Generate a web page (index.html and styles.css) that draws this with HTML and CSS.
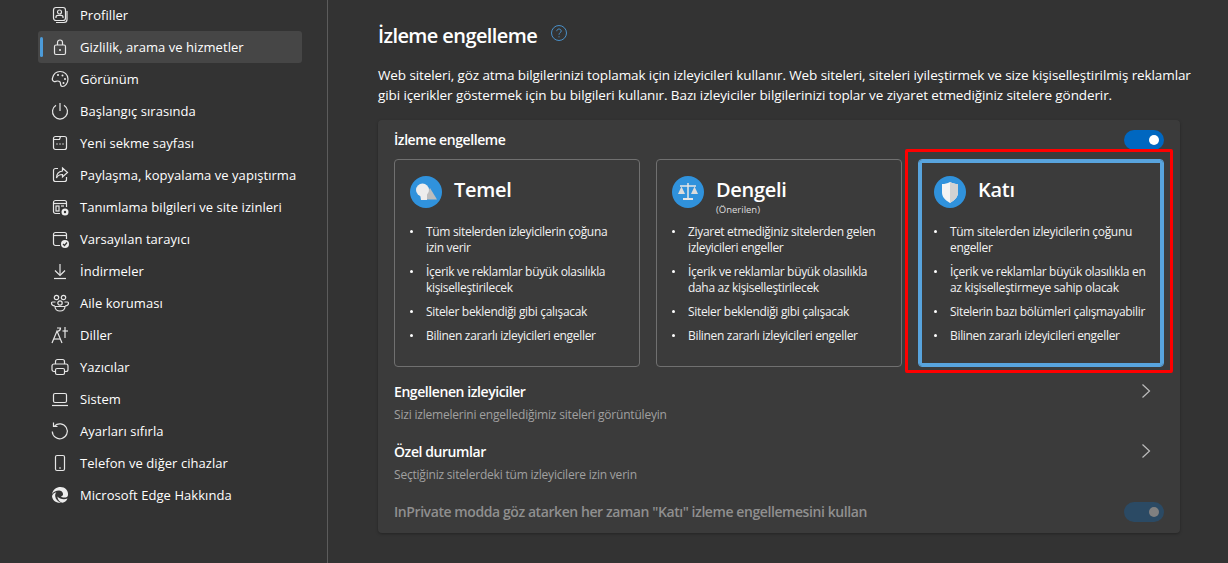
FILE: index.html
```html
<!DOCTYPE html>
<html lang="tr">
<head>
    <meta charset="UTF-8">
    <title>Ayarlar</title>
    <link rel="stylesheet" href="styles.css">
</head>
<body>
    <div class="page">
        <nav class="sidebar">
            <a class="nav-item">
                <svg class="nav-icon" viewBox="0 0 20 20"><rect x="3.500" y="2.500" width="12" height="13" rx="2.500"/><circle cx="9.500" cy="7" r="2"/><path d="M6 13v-1c0-1 1-1.700 2-1.700h3c1 0 2 .7 2 1.700v1"/><path d="M17 6v8.500c0 2-1 3-3 3H6"/></svg>
                <span>Profiller</span>
            </a>
            <a class="nav-item active">
                <svg class="nav-icon" viewBox="0 0 20 20"><rect x="4.500" y="8" width="11" height="9.500" rx="1.500"/><path d="M7.500 8V5.500a2.500 2.500 0 0 1 5 0V8"/><circle class="fill" cx="10" cy="13" r="1"/></svg>
                <span>Gizlilik, arama ve hizmetler</span>
            </a>
            <a class="nav-item">
                <svg class="nav-icon" viewBox="0 0 20 20"><path d="M10 2.500c4.500 0 8 3.200 8 7.500 0 4.200-3 7.500-5.500 7.500-2 0-2-1.500-2-3 0-1.500-1-2.500-3-2.500-1.500 0-2.500 1-3.500.5-1.500-.7-2-2-1.500-3.500C3.500 5 6.500 2.500 10 2.500z"/><circle class="fill" cx="8" cy="6" r="1"/><circle class="fill" cx="12.500" cy="6.500" r="1"/><circle class="fill" cx="15" cy="10" r="1"/><circle class="fill" cx="13.500" cy="14" r="1"/></svg>
                <span>Görünüm</span>
            </a>
            <a class="nav-item">
                <svg class="nav-icon" viewBox="0 0 20 20"><path d="M10 2v8"/><path d="M6 4.200a7.500 7.500 0 1 0 8 0"/></svg>
                <span>Başlangıç sırasında</span>
            </a>
            <a class="nav-item">
                <svg class="nav-icon" viewBox="0 0 20 20"><rect x="3.500" y="3.500" width="13" height="13" rx="2"/><path d="M3.500 6.500h6l1-3"/><path class="dots" d="M6.500 11h1M9.500 11h1M12.500 11h1"/></svg>
                <span>Yeni sekme sayfası</span>
            </a>
            <a class="nav-item">
                <svg class="nav-icon" viewBox="0 0 20 20"><path d="M8 3.500H5.500a2 2 0 0 0-2 2v9a2 2 0 0 0 2 2h9a2 2 0 0 0 2-2V12"/><path d="M12.500 3l5 4.500-5 4.500V9.500c-3 0-5 1-6 3.500 0-4 2-6.500 6-7z"/></svg>
                <span>Paylaşma, kopyalama ve yapıştırma</span>
            </a>
            <a class="nav-item">
                <svg class="nav-icon" viewBox="0 0 20 20"><path d="M10 16.500H5.500a2 2 0 0 1-2-2v-9a2 2 0 0 1 2-2h9a2 2 0 0 1 2 2V10"/><path d="M3.500 6.500h13"/><rect x="6" y="9" width="3" height="5"/><path d="M11 9h3"/><circle class="fill" cx="15" cy="15" r="3.500"/><circle class="hole" cx="15" cy="15" r="1.200"/></svg>
                <span>Tanımlama bilgileri ve site izinleri</span>
            </a>
            <a class="nav-item">
                <svg class="nav-icon" viewBox="0 0 20 20"><path d="M10 16.500H5.500a2 2 0 0 1-2-2v-9a2 2 0 0 1 2-2h9a2 2 0 0 1 2 2V10"/><path d="M3.500 6.500h13"/><circle class="fill" cx="15" cy="15" r="4"/><path class="check" d="M13 15l1.500 1.500 2.500-3"/></svg>
                <span>Varsayılan tarayıcı</span>
            </a>
            <a class="nav-item">
                <svg class="nav-icon" viewBox="0 0 20 20"><path d="M10 3v11"/><path d="M5 9.500l5 5 5-5"/><path d="M4 17.500h12"/></svg>
                <span>İndirmeler</span>
            </a>
            <a class="nav-item">
                <svg class="nav-icon" viewBox="0 0 20 20"><circle cx="6.500" cy="4.500" r="2.200"/><circle cx="13.500" cy="4.500" r="2.200"/><circle cx="10" cy="10" r="2.200"/><path d="M5.500 9H2.500c-1 0-1 .7-1 1.300 0 1.500 1.500 2.500 3.500 2.700"/><path d="M14.500 9h3c1 0 1 .7 1 1.300 0 1.500-1.500 2.500-3.500 2.700"/><path d="M5 13.500c0 2.500 2 4.500 5 4.500s5-2 5-4.500z"/></svg>
                <span>Aile koruması</span>
            </a>
            <a class="nav-item">
                <svg class="nav-icon" viewBox="0 0 20 20"><path d="M2 18L7 6l5 12"/><path d="M4 14h6"/><path d="M7 3h3.500c0 2-1 3-3 3.500"/><path d="M15 2v11"/><path d="M12.500 6h5.500"/></svg>
                <span>Diller</span>
            </a>
            <a class="nav-item">
                <svg class="nav-icon" viewBox="0 0 20 20"><path d="M5.500 7V4.500a2 2 0 0 1 2-2h5a2 2 0 0 1 2 2V7"/><path d="M5.500 14.500H4a2 2 0 0 1-2-2V9a2 2 0 0 1 2-2h12a2 2 0 0 1 2 2v3.500a2 2 0 0 1-2 2h-1.500"/><rect x="5.500" y="11.500" width="9" height="6" rx="1.500"/></svg>
                <span>Yazıcılar</span>
            </a>
            <a class="nav-item">
                <svg class="nav-icon" viewBox="0 0 20 20"><rect x="3.500" y="4.500" width="13" height="9" rx="1.500"/><path d="M2 16.500h16"/></svg>
                <span>Sistem</span>
            </a>
            <a class="nav-item">
                <svg class="nav-icon" viewBox="0 0 20 20"><path d="M4.500 5a7.500 7.500 0 1 1-2.200 5.500"/><path d="M3.500 1.500V5.500H7.500"/></svg>
                <span>Ayarları sıfırla</span>
            </a>
            <a class="nav-item">
                <svg class="nav-icon" viewBox="0 0 20 20"><rect x="5.500" y="2.500" width="9" height="15" rx="1.500"/><path d="M9 15h2"/></svg>
                <span>Telefon ve diğer cihazlar</span>
            </a>
            <a class="nav-item">
                <svg class="nav-icon" viewBox="0 0 20 20"><path class="fill" d="M2 9C3 4.500 6.500 2 10.500 2c4.500 0 8 3.500 7.500 8 0 1.800-1.800 2.600-3.800 2.600-1.500 0-2.700-.4-3.200-1 1.500-.5 2.200-1.500 2-2.800C12.500 6.500 11 5.500 9 5.500 6 5.500 3.500 7 2 9z"/><path class="fill" d="M2 11c.5-2 2.300-3.600 4.500-3.800-1 1-1.500 2.300-1.300 4 .3 3 2.800 5.500 6 6.500C6.500 18.500 2.300 15.500 2 11z"/><path class="fill" d="M7.500 11.500c1.500 1.800 3.500 2.800 6.500 2.800 1 0 2.500-.3 3.500-.8-1 2.500-3 4-5 4.300-2.500-.5-5-3-5-6.300z"/></svg>
                <span>Microsoft Edge Hakkında</span>
            </a>
        </nav>

        <main class="content">
            <div class="page-title">
                <h1>İzleme engelleme</h1>
                <svg class="help-icon" viewBox="0 0 16 16"><circle cx="8" cy="8" r="7.500"/><path d="M5.800 6.200c0-1.300 1-2.200 2.200-2.200s2.200.9 2.200 2c0 1.700-2.200 1.800-2.200 3.700"/><path d="M8 11.300v1"/></svg>
            </div>
            <p class="intro">Web siteleri, göz atma bilgilerinizi toplamak için izleyicileri kullanır. Web siteleri, siteleri iyileştirmek ve size kişiselleştirilmiş reklamlar<br>gibi içerikler göstermek için bu bilgileri kullanır. Bazı izleyiciler bilgilerinizi toplar ve ziyaret etmediğiniz sitelere gönderir.</p>

            <section class="panel">
                <div class="panel-head">
                    <span class="strong">İzleme engelleme</span>
                    <span class="toggle on"></span>
                </div>

                <div class="cards">
                    <div class="card">
                        <div class="card-head">
                            <span class="badge">
                                <svg viewBox="0 0 32 32"><path d="M20 12l7 11.500H13z" fill="#bdbdbd"/><circle cx="12.500" cy="14" r="6.500" fill="#ededed"/><path d="M10 18h7v6h-6z" fill="#ededed"/></svg>
                            </span>
                            <div class="card-title">Temel</div>
                        </div>
                        <ul>
                            <li>Tüm sitelerden izleyicilerin çoğuna izin verir</li>
                            <li>İçerik ve reklamlar büyük olasılıkla kişiselleştirilecek</li>
                            <li>Siteler beklendiği gibi çalışacak</li>
                            <li>Bilinen zararlı izleyicileri engeller</li>
                        </ul>
                    </div>
                    <div class="card">
                        <div class="card-head">
                            <span class="badge">
                                <svg viewBox="0 0 32 32"><g fill="none" stroke="#e6e6e6" stroke-width="1.500"><path d="M16 7v16"/><path d="M8 10h16"/><path d="M11 23h10" stroke-width="2"/></g><path d="M9.500 10.500L6 18h7z" fill="#dcdcdc"/><path d="M22.500 10.500L19 18h7z" fill="#dcdcdc"/></svg>
                            </span>
                            <div>
                                <div class="card-title">Dengeli</div>
                                <div class="card-note">(Önerilen)</div>
                            </div>
                        </div>
                        <ul>
                            <li>Ziyaret etmediğiniz sitelerden gelen izleyicileri engeller</li>
                            <li>İçerik ve reklamlar büyük olasılıkla daha az kişiselleştirilecek</li>
                            <li>Siteler beklendiği gibi çalışacak</li>
                            <li>Bilinen zararlı izleyicileri engeller</li>
                        </ul>
                    </div>
                    <div class="card selected">
                        <div class="card-head">
                            <span class="badge">
                                <svg viewBox="0 0 32 32"><path d="M16 6c3 1.500 5 2 8 2v8.500c0 4.500-3 7.500-8 10.500-5-3-8-6-8-10.500V8c3 0 5-.5 8-2z" fill="#f4f4f4"/><path d="M16 6c3 1.500 5 2 8 2v8.500c0 4.500-3 7.500-8 10.500z" fill="#d2d2d2"/></svg>
                            </span>
                            <div class="card-title">Katı</div>
                        </div>
                        <ul>
                            <li>Tüm sitelerden izleyicilerin çoğunu engeller</li>
                            <li>İçerik ve reklamlar büyük olasılıkla en az kişiselleştirmeye sahip olacak</li>
                            <li>Sitelerin bazı bölümleri çalışmayabilir</li>
                            <li>Bilinen zararlı izleyicileri engeller</li>
                        </ul>
                        <div class="highlight"></div>
                    </div>
                </div>

                <div class="link-row">
                    <div>
                        <div class="strong">Engellenen izleyiciler</div>
                        <div class="sub">Sizi izlemelerini engellediğimiz siteleri görüntüleyin</div>
                    </div>
                    <svg class="chevron" viewBox="0 0 10 16"><path d="M1.500 1.500L8.500 8l-7 6.500"/></svg>
                </div>
                <div class="link-row">
                    <div>
                        <div class="strong">Özel durumlar</div>
                        <div class="sub">Seçtiğiniz sitelerdeki tüm izleyicilere izin verin</div>
                    </div>
                    <svg class="chevron" viewBox="0 0 10 16"><path d="M1.500 1.500L8.500 8l-7 6.500"/></svg>
                </div>
                <div class="private-row">
                    <span class="strong muted">InPrivate modda göz atarken her zaman "Katı" izleme engellemesini kullan</span>
                    <span class="toggle disabled"></span>
                </div>
            </section>
        </main>
    </div>
</body>
</html>
```

FILE: styles.css
```css
* {
    box-sizing: border-box;
}
html, body {
    height: 100%;
}
body {
    margin: 0;
    overflow: hidden;
    background-color: #333333;
    color: #ffffff;
    font-family: "Open Sans", "Noto Sans", sans-serif;
}
.page {
    display: flex;
    height: 100%;
}

/* sidebar */
.sidebar {
    flex: 0 0 328px;
    height: 100%;
    padding: 0 25px 0 38px;
    border-right: 1px solid #5c5c5c;
    display: flex;
    flex-direction: column;
}
.nav-item {
    position: relative;
    flex: 0 0 32px;
    display: flex;
    align-items: center;
    gap: 10px;
    padding-left: 12px;
    border-radius: 3px;
    font-size: 13px;
    letter-spacing: 0.05px;
    white-space: nowrap;
    color: #ffffff;
}
.nav-item:first-child {
    margin-top: -1px;
}
.nav-item.active {
    background-color: #464646;
}
.nav-item.active::before {
    content: "";
    position: absolute;
    left: 2px;
    top: 6px;
    width: 3px;
    height: 20px;
    border-radius: 2px;
    background-color: #4c9bd9;
}
.nav-icon {
    flex: 0 0 20px;
    width: 20px;
    height: 20px;
    fill: none;
    stroke: #e6e6e6;
    stroke-width: 1.200;
    overflow: visible;
}
.nav-icon .fill {
    fill: #ececec;
    stroke: none;
}
.nav-icon .hole {
    fill: #333333;
    stroke: none;
}
.nav-icon .check {
    stroke: #333333;
}
.nav-icon .dots {
    stroke-width: 1.600;
}

/* main column */
.content {
    flex: 1;
    min-width: 0;
    padding-left: 50px;
}
.page-title {
    display: flex;
    align-items: flex-start;
    gap: 14px;
    height: 47px;
    padding-top: 22px;
}
.page-title h1 {
    margin: 0;
    font-size: 20px;
    line-height: 28px;
    font-weight: 600;
    letter-spacing: -0.6px;
}
.help-icon {
    width: 16px;
    height: 16px;
    margin-top: 3px;
    fill: none;
    stroke: #4a90c8;
    stroke-width: 1;
}
.intro {
    margin: 0;
    padding-top: 18px;
    height: 73px;
    font-size: 13.500px;
    line-height: 20px;
    white-space: nowrap;
    letter-spacing: -0.1px;
}

/* panel */
.panel {
    width: 802px;
    height: 413px;
    padding: 0 16px;
    background-color: #3b3b3b;
    border-radius: 4px;
    box-shadow: 0 1px 3px rgba(0, 0, 0, 0.3);
}
.panel-head {
    display: flex;
    align-items: center;
    justify-content: space-between;
    height: 39px;
}
.strong {
    font-size: 14px;
    line-height: 20px;
    font-weight: 600;
    letter-spacing: -0.42px;
}
.muted {
    color: #8f8f8f;
}
.sub {
    margin-top: 5px;
    font-size: 12px;
    line-height: 16px;
    color: #a0a0a0;
    letter-spacing: -0.2px;
}
.toggle {
    position: relative;
    flex: 0 0 40px;
    width: 40px;
    height: 20px;
    border-radius: 10px;
}
.toggle::after {
    content: "";
    position: absolute;
    right: 5px;
    top: 5px;
    width: 10px;
    height: 10px;
    border-radius: 50%;
}
.toggle.on {
    background-color: #0067c0;
}
.toggle.on::after {
    background-color: #ffffff;
}
.toggle.disabled {
    background-color: #2b4a64;
}
.toggle.disabled::after {
    background-color: #808080;
}

/* cards */
.cards {
    display: grid;
    grid-template-columns: repeat(3, 246px);
    grid-template-rows: 208px;
    column-gap: 16px;
}
.card {
    position: relative;
    padding: 16px 12px 0 15px;
    border: 1px solid #707070;
    border-radius: 4px;
}
.card.selected {
    border-color: #58a4de;
    box-shadow: inset 0 0 0 3px #58a4de;
}
.highlight {
    position: absolute;
    top: -11px;
    left: -14px;
    right: -10px;
    bottom: -7px;
    border: 3px solid #ff0000;
    border-radius: 2px;
}
.card-head {
    display: flex;
    align-items: flex-start;
    gap: 12px;
    height: 32px;
}
.badge {
    flex: 0 0 32px;
    width: 32px;
    height: 32px;
    border-radius: 50%;
    background-color: #3092dc;
}
.badge svg {
    display: block;
    width: 32px;
    height: 32px;
}
.card-title {
    font-size: 20px;
    line-height: 28px;
    font-weight: 600;
    letter-spacing: -0.3px;
}
.card-note {
    font-size: 9.500px;
    line-height: 12px;
    color: #dddddd;
}
.card ul {
    list-style: none;
    margin: 16px 0 0;
    padding: 0;
}
.card li {
    position: relative;
    padding-left: 16px;
    margin-bottom: 8px;
    font-size: 12px;
    line-height: 16px;
    letter-spacing: -0.32px;
    color: #f2f2f2;
}
.card li::before {
    content: "";
    position: absolute;
    left: 0;
    top: 6px;
    width: 3px;
    height: 3px;
    border-radius: 50%;
    background-color: #ffffff;
}

/* rows under the cards */
.link-row {
    display: flex;
    align-items: flex-start;
    justify-content: space-between;
    height: 60px;
    padding-top: 15px;
}
.chevron {
    width: 10px;
    height: 16px;
    margin: 1px 13px 0 0;
    fill: none;
    stroke: #bdbdbd;
    stroke-width: 1.200;
}
.private-row {
    display: flex;
    align-items: center;
    justify-content: space-between;
    height: 40px;
    margin-top: 5px;
}
```
